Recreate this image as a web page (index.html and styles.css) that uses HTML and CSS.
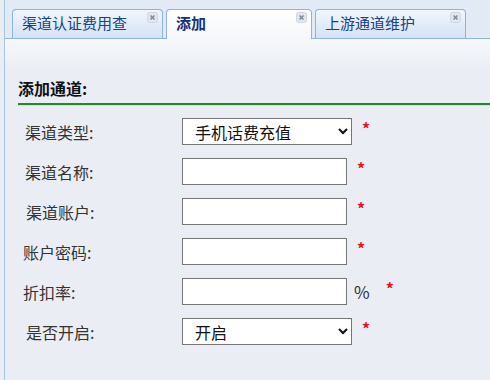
FILE: index.html
```html
<!DOCTYPE html>
<html>
<head>
    <meta charset="UTF-8">
    <title>添加通道</title>
    <link rel="stylesheet" href="styles.css">
</head>
<body>
    <div class="page">
        <div class="tabbar">
            <div class="tab">渠道认证费用查<span class="close"><svg width="11" height="11" viewBox="0 0 11 11"><rect x="0.5" y="0.5" width="10" height="10" rx="2" fill="#e2e7ee" stroke="#cfd7e2"/><path d="M3.5 3.5L7.5 7.5M7.5 3.5L3.5 7.5" stroke="#7d8aa0" stroke-width="1.6"/></svg></span></div>
            <div class="tab active">添加<span class="close"><svg width="11" height="11" viewBox="0 0 11 11"><rect x="0.5" y="0.5" width="10" height="10" rx="2" fill="#e2e7ee" stroke="#cfd7e2"/><path d="M3.5 3.5L7.5 7.5M7.5 3.5L3.5 7.5" stroke="#7d8aa0" stroke-width="1.6"/></svg></span></div>
            <div class="tab">上游通道维护<span class="close"><svg width="11" height="11" viewBox="0 0 11 11"><rect x="0.5" y="0.5" width="10" height="10" rx="2" fill="#e2e7ee" stroke="#cfd7e2"/><path d="M3.5 3.5L7.5 7.5M7.5 3.5L3.5 7.5" stroke="#7d8aa0" stroke-width="1.6"/></svg></span></div>
        </div>
        <div class="content">
            <h2 class="title">添加通道:</h2>
            <div class="form">
                <div class="row">
                    <label>渠道类型:</label>
                    <select class="field select"><option>手机话费充值</option></select>
                    <span class="req">*</span>
                </div>
                <div class="row">
                    <label>渠道名称:</label>
                    <input class="field" type="text">
                    <span class="req">*</span>
                </div>
                <div class="row">
                    <label class="shift">渠道账户:</label>
                    <input class="field" type="text">
                    <span class="req">*</span>
                </div>
                <div class="row">
                    <label class="left">账户密码:</label>
                    <input class="field" type="text">
                    <span class="req">*</span>
                </div>
                <div class="row">
                    <label class="left">折扣率:</label>
                    <input class="field" type="text">
                    <span class="unit">%</span>
                    <span class="req">*</span>
                </div>
                <div class="row">
                    <label class="shift">是否开启:</label>
                    <select class="field select"><option>开启</option><option>关闭</option></select>
                    <span class="req">*</span>
                </div>
            </div>
        </div>
    </div>
</body>
</html>
```

FILE: styles.css
```css
body {
    margin: 0;
    background: #e9eef4;
    font-family: "Noto Sans CJK SC", "Liberation Sans", sans-serif;
    color: #333;
}

.page {
    margin-left: 4px;
    border-left: 1px solid #a9c3e6;
    min-height: 100vh;
}

.tabbar {
    display: flex;
    gap: 3px;
    height: 29px;
    padding: 9px 0 0 7px;
    background: #e2eaf5;
    border-bottom: 1px solid #8db2e3;
}

.tab {
    position: relative;
    box-sizing: border-box;
    width: 151px;
    height: 29px;
    padding-left: 9px;
    border: 1px solid #8db2e3;
    border-bottom: none;
    border-radius: 4px 4px 0 0;
    background: linear-gradient(#f1f6fd, #d5e2f4);
    color: #15428b;
    font-size: 15px;
    line-height: 26px;
}

.tab.active {
    width: 146px;
    height: 30px;
    margin-bottom: -1px;
    background: linear-gradient(#ffffff, #f4f7fc);
    font-weight: bold;
    color: #15317a;
}

.close {
    position: absolute;
    top: 2px;
    right: 4px;
    line-height: 0;
}

.content {
    padding: 40px 0 20px 13px;
    background: linear-gradient(#f6f8fb 0, #eaeef4 30px);
}

.title {
    margin: 0;
    padding-bottom: 6px;
    border-bottom: 2px solid #258a25;
    box-shadow: 0 1px 0 #c5ecc5;
    font-size: 16px;
    line-height: 18px;
    color: #111;
}

.form {
    display: flex;
    flex-direction: column;
    gap: 13px;
    padding: 13px 0 0 7px;
}

.row {
    display: flex;
    align-items: center;
    height: 27px;
}

.row label {
    width: 157px;
    font-size: 16px;
    color: #333;
}

.row label.left {
    width: 159px;
    margin-left: -2px;
}

.row label.shift {
    width: 156px;
    margin-left: 1px;
}

.field {
    box-sizing: border-box;
    width: 165px;
    height: 27px;
    margin: 0;
    padding: 0 8px;
    border: 1px solid #767676;
    background: #fff;
    font-family: inherit;
    font-size: 16px;
    color: #111;
}

.field.select {
    width: 170px;
    border-radius: 0;
}

.req {
    margin-left: 10px;
    margin-top: -8px;
    color: #e8101a;
    font-size: 16px;
    font-weight: bold;
}

.unit {
    margin-left: 7px;
    font-size: 17px;
    color: #333;
}

.unit + .req {
    margin-left: 16px;
}
```
